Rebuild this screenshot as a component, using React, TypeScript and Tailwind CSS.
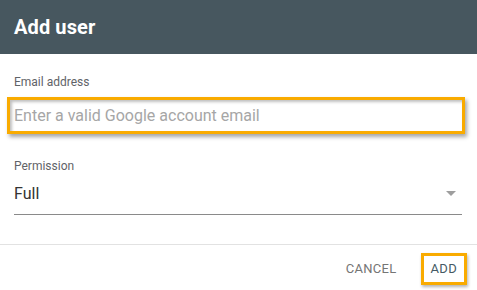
export default function App() {
  return (
    <div
      className="w-[477px] h-[290px] bg-white overflow-hidden flex flex-col"
      style={{ fontFamily: 'Roboto, "Liberation Sans", sans-serif' }}
    >
      <div className="h-[54px] bg-[#47575f] flex items-center px-[14px] shrink-0">
        <h1 className="text-white text-[20px] font-bold tracking-[0.1px]">Add user</h1>
      </div>

      <div className="px-[14px] pt-[21px] flex flex-col">
        <label className="text-[12px] text-[#5f6368] leading-[14px]">Email address</label>
        <div className="mt-[8px] -ml-[7px] w-[458px] h-[37px] border-[3px] border-[#f9ab00] shadow-[2px_3px_4px_rgba(0,0,0,0.35),inset_2px_2px_3px_rgba(0,0,0,0.25)] flex items-center px-[4px]">
          <span className="text-[16px] text-[#a6a6a6]">Enter a valid Google account email</span>
        </div>

        <label className="mt-[25px] text-[12px] text-[#5f6368] leading-[14px]">Permission</label>
        <div className="mt-[11px] flex items-center justify-between pr-[6px] border-b border-[#8a8a8a] pb-[11px] w-[448px]">
          <span className="text-[16px] text-[#333] leading-[19px]">Full</span>
          <svg width="10" height="5" viewBox="0 0 10 5">
            <path d="M0 0h10L5 5z" fill="#9e9e9e" />
          </svg>
        </div>
      </div>

      <div className="mt-[29px] border-t border-[#e2e2e2] flex-1 flex items-center justify-end pr-[10px] gap-[24px] pt-[2px]">
        <button className="text-[13px] text-[#757575] tracking-[0.3px]">CANCEL</button>
        <button className="h-[32px] px-[7px] border-[3px] border-[#f9ab00] text-[13px] text-[#455a64] tracking-[0.3px] shadow-[1px_2px_3px_rgba(0,0,0,0.3)]">
          ADD
        </button>
      </div>
    </div>
  );
}
